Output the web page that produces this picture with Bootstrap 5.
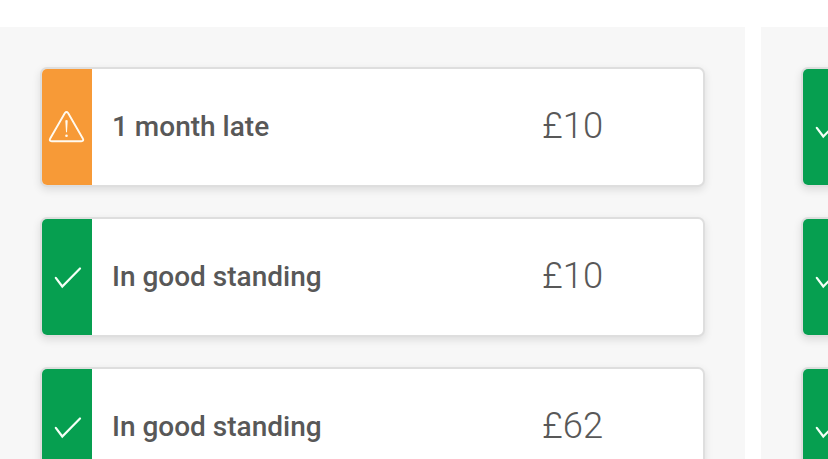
<!DOCTYPE html>
<html lang="en">
<head>
<meta charset="utf-8">
<meta name="viewport" content="width=device-width, initial-scale=1">
<title>Payment status</title>
<link href="https://cdn.jsdelivr.net/npm/bootstrap@5.3.0/dist/css/bootstrap.min.css" rel="stylesheet">
<style>
body{font-family:Roboto,sans-serif;color:#585858;height:459px}
.board{padding-top:27px;gap:16px;height:459px}
.lane{background:#f7f7f7;width:745px;padding:40px 40px 0;height:600px}
.stack{gap:30px}
.status-card{height:120px;border:2px solid #dedede;border-radius:7px;box-shadow:0 3px 8px rgba(0,0,0,.11);width:665px}
.strip{width:50px}
.strip-late{background:#f79a37}
.strip-ok{background:#069f50}
.status-label{font-size:28px;font-weight:500;padding-left:20px;width:450px;line-height:36px}
.amount{font-size:36.400px;font-weight:300;line-height:44px;padding-bottom:2px}
</style>
</head>
<body class="bg-white overflow-hidden">
<svg class="d-none">
<symbol id="tick" viewBox="0 0 50 116"><path d="M13.800 58.800 20.300 67.500 38 49.500" fill="none" stroke="#f4fff6" stroke-width="2.200" stroke-linecap="round"/></symbol>
<symbol id="warn" viewBox="0 0 50 116"><path d="M22.900 44Q24.500 42 26.100 44L40.800 69.500Q42.200 72.200 39.300 72.200H9.700Q6.800 72.200 8.200 69.500Z" fill="none" stroke="#fffaf0" stroke-width="1.900" stroke-linejoin="round"/><path d="M23.300 51.500Q24.500 50.500 25.700 51.500L25 63.200H24Z" fill="#fffaf0"/><circle cx="24.500" cy="66.800" r="1.300" fill="#fffaf0"/></symbol>
</svg>
<main class="board d-flex overflow-hidden">
<section class="lane flex-shrink-0"><div class="stack d-flex flex-column">
<article class="status-card d-flex align-items-center bg-white overflow-hidden"><div class="strip strip-late h-100"><svg width="50" height="116"><use href="#warn"/></svg></div><div class="status-label">1 month late</div><div class="amount">£10</div></article>
<article class="status-card d-flex align-items-center bg-white overflow-hidden"><div class="strip strip-ok h-100"><svg width="50" height="116"><use href="#tick"/></svg></div><div class="status-label">In good standing</div><div class="amount">£10</div></article>
<article class="status-card d-flex align-items-center bg-white overflow-hidden"><div class="strip strip-ok h-100"><svg width="50" height="116"><use href="#tick"/></svg></div><div class="status-label">In good standing</div><div class="amount">£62</div></article>
</div></section>
<section class="lane flex-shrink-0"><div class="stack d-flex flex-column">
<article class="status-card d-flex bg-white overflow-hidden"><div class="strip strip-ok h-100"><svg width="50" height="116"><use href="#tick"/></svg></div></article>
<article class="status-card d-flex bg-white overflow-hidden"><div class="strip strip-ok h-100"><svg width="50" height="116"><use href="#tick"/></svg></div></article>
<article class="status-card d-flex bg-white overflow-hidden"><div class="strip strip-ok h-100"><svg width="50" height="116"><use href="#tick"/></svg></div></article>
</div></section>
</main>
<script src="https://cdn.jsdelivr.net/npm/bootstrap@5.3.0/dist/js/bootstrap.bundle.min.js"></script>
</body>
</html>
